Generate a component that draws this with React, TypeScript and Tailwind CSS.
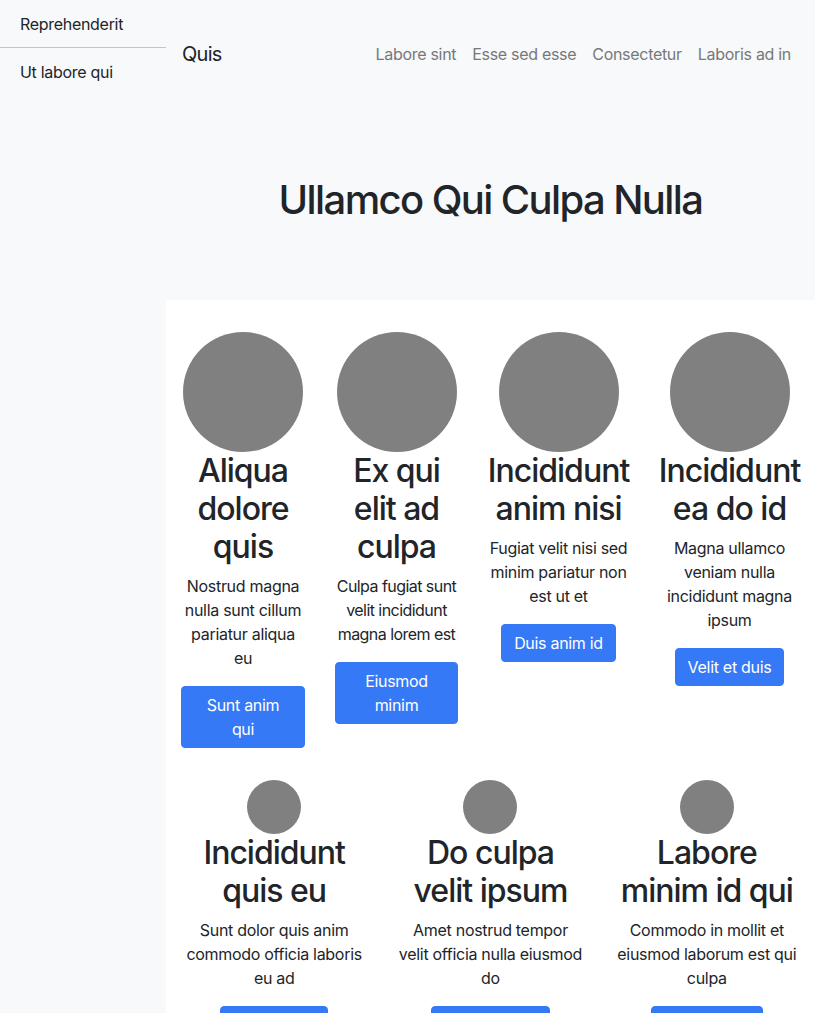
import React from "react";

const row1 = [
  { w: "w-[154px]", t: "Aliqua dolore quis", p: "Nostrud magna nulla sunt cillum pariatur aliqua eu", b: "Sunt anim qui", pt: "tracking-[-0.3px]" },
  { w: "w-[153px]", t: "Ex qui elit ad culpa", p: "Culpa fugiat sunt velit incididunt magna lorem est", b: "Eiusmod minim", pt: "tracking-[-0.55px]" },
  { w: "w-[171px]", t: "Incididunt anim nisi", p: "Fugiat velit nisi sed minim pariatur non est ut et", b: "Duis anim id", pt: "tracking-[-0.3px]" },
  { w: "w-[171px]", t: "Incididunt ea do id", p: "Magna ullamco veniam nulla incididunt magna ipsum", b: "Velit et duis", pt: "tracking-[-0.3px]" },
];

const row2 = [
  { t: "Incididunt quis eu", p: "Sunt dolor quis anim commodo officia laboris eu ad", b: "Aute ipsum" },
  { t: "Do culpa velit ipsum", p: "Amet nostrud tempor velit officia nulla eiusmod do", b: "Dolor magna" },
  { t: "Labore minim id qui", p: "Commodo in mollit et eiusmod laborum est qui culpa", b: "Cillum dolor" },
];

export default function App() {
  return (
    <div className="flex min-h-[1013px] w-[815px] text-[#212529] tracking-[-0.3px]" style={{ fontFamily: "Inter, 'Noto Sans', sans-serif" }}>
      <aside className="w-[166px] shrink-0 bg-[#f8f9fa]">
        <div className="h-[48px] border-b border-[#c3c4c5] px-5 py-3 text-[16px] leading-6">Reprehenderit</div>
        <div className="px-5 py-3 text-[16px] leading-6">Ut labore qui</div>
      </aside>
      <main className="flex-1 bg-white">
        <header className="h-[300px] bg-[#f8f9fa] pt-[26px]">
          <nav className="flex h-[56px] items-center justify-between px-4">
            <span className="py-[5px] text-[20px] leading-[30px] tracking-[-0.7px]">Quis</span>
            <div className="flex text-[16px] leading-6 text-[#76787a]">
              <span className="px-2">Labore sint</span>
              <span className="px-2">Esse sed esse</span>
              <span className="px-2">Consectetur</span>
              <span className="px-2">Laboris ad in</span>
            </div>
          </nav>
          <h1 className="mt-[94px] text-center text-[40px] font-medium leading-[48px] tracking-[-1.6px]">Ullamco Qui Culpa Nulla</h1>
        </header>
        <div className="flex items-start pt-8">
          {row1.map((c) => (
            <div key={c.t} className={`${c.w} flex flex-col items-center px-[15px] text-center`}>
              <div className="h-[120px] w-[120px] rounded-full bg-[#808080]" />
              <h2 className="mb-2 text-[32px] font-medium leading-[38px] tracking-[-1px]">{c.t}</h2>
              <p className={`${c.pt} mb-4 text-[16px] leading-6`}>{c.p}</p>
              <button className="rounded-[4px] border border-[#3579f6] bg-[#3579f6] px-3 py-[6px] text-[16px] leading-6 text-white">{c.b}</button>
            </div>
          ))}
        </div>
        <div className="grid grid-cols-3 pt-8">
          {row2.map((c) => (
            <div key={c.t} className="flex flex-col items-center px-[15px] text-center">
              <div className="h-[54px] w-[54px] rounded-full bg-[#808080]" />
              <h2 className="mb-2 text-[32px] font-medium leading-[38px] tracking-[-1px]">{c.t}</h2>
              <p className="mb-4 text-[16px] leading-6">{c.p}</p>
              <button className="rounded-[4px] border border-[#3579f6] bg-[#3579f6] px-3 py-[6px] text-[16px] leading-6 text-white">{c.b}</button>
            </div>
          ))}
        </div>
      </main>
    </div>
  );
}
